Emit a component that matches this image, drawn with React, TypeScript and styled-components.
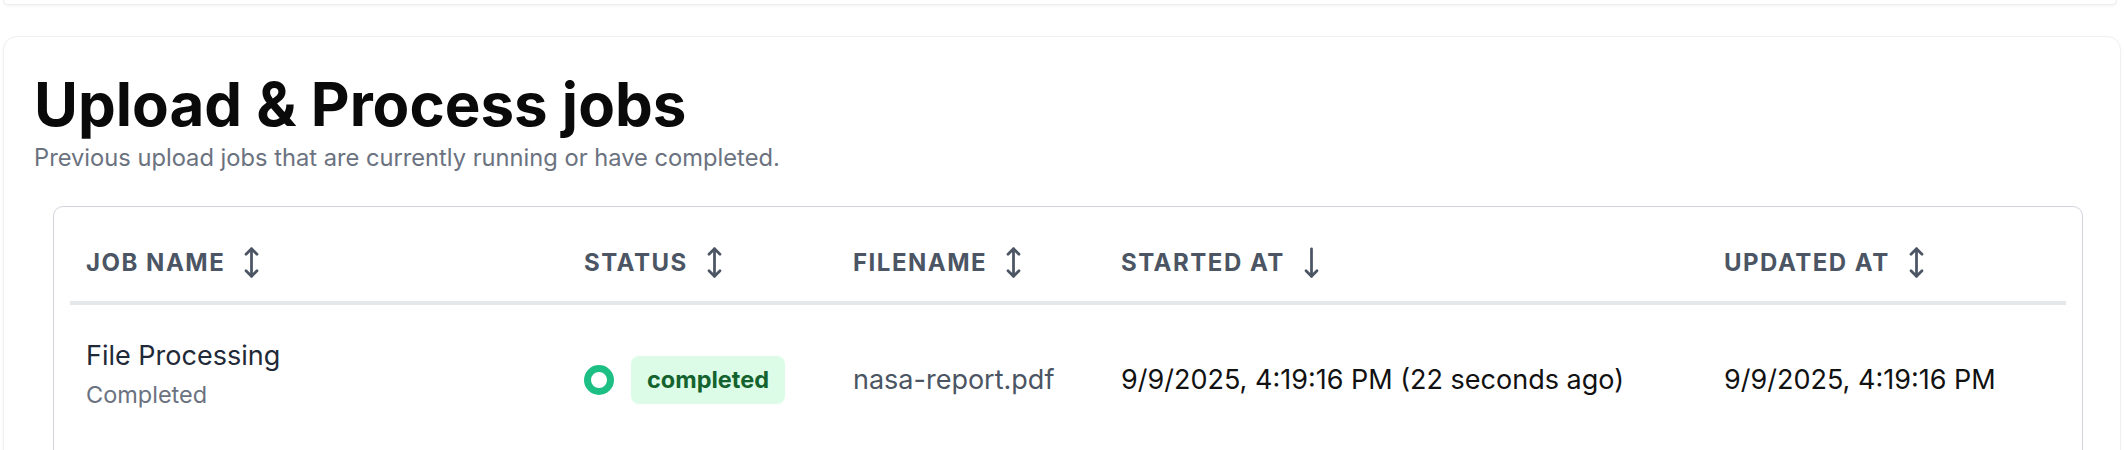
import React from 'react'
import styled, { createGlobalStyle } from 'styled-components'
import { MoveVertical, MoveDown } from 'lucide-react'

const GlobalStyle = createGlobalStyle`
  * { box-sizing: border-box; }
  body {
    margin: 0;
    padding: 0 3px;
    background: #ffffff;
    font-family: Inter, "Noto Sans", sans-serif;
    color: #111827;
  }
`

const TopCard = styled.div`
  height: 5px;
  background: #fff;
  border: 1px solid #eeeeee;
  border-top: none;
  border-radius: 0 0 12px 12px;
  box-shadow: 0 1px 3px rgba(0, 0, 0, 0.06);
  margin-right: 4px;
`

const Card = styled.section`
  margin-top: 31px;
  background: #fff;
  border: 1px solid #f0f0f0;
  border-radius: 14px;
  box-shadow: 0 1px 3px rgba(0, 0, 0, 0.04);
  padding: 35px 30px 0 30px;
  height: 440px;
`

const Title = styled.h1`
  margin: 0;
  font-size: 60px;
  line-height: 65px;
  font-weight: 700;
  color: #0a0a0a;
`

const Subtitle = styled.p`
  margin: 5px 0 0;
  font-size: 23.7px;
  line-height: 32px;
  color: #6b7280;
`

const TableWrap = styled.div`
  margin: 32px 7px 0 19px;
  border: 1px solid #d1d5db;
  border-radius: 10px;
  padding: 16px 16px 0;
  height: 300px;
`

const Table = styled.table`
  width: 100%;
  border-collapse: collapse;
  table-layout: fixed;
`

const HeadCell = styled.th`
  height: 80px;
  padding: 0 16px;
  text-align: left;
  vertical-align: middle;
  border-bottom: 4px solid #e5e7eb;
  font-size: 24px;
  font-weight: 700;
  letter-spacing: 1.5px;
  text-transform: uppercase;
  color: #4b5563;
  white-space: nowrap;
`

const HeadInner = styled.span`
  display: inline-flex;
  align-items: center;
  gap: 10px;
  svg {
    color: #4b5563;
  }
`

const Cell = styled.td<{ $tone?: 'muted' | 'strong' }>`
  padding: 34px 16px 30px;
  vertical-align: middle;
  font-size: 27px;
  line-height: 34px;
  white-space: nowrap;
  color: ${p => (p.$tone === 'muted' ? '#4b5563' : p.$tone === 'strong' ? '#111111' : '#1f2937')};
`

const JobName = styled.div`
  font-size: 27px;
  line-height: 34px;
  color: #1f2937;
`

const JobSub = styled.div`
  margin: 7px 0 10px;
  font-size: 23.5px;
  line-height: 30px;
  color: #6b7280;
`

const StatusWrap = styled.div`
  display: flex;
  align-items: center;
  gap: 17px;
`

const Ring = styled.span`
  width: 30px;
  height: 30px;
  border-radius: 50%;
  border: 7px solid #1dbf84;
  flex-shrink: 0;
`

const Badge = styled.span`
  display: inline-flex;
  align-items: center;
  height: 48px;
  padding: 0 16px;
  border-radius: 8px;
  background: #dcfce7;
  color: #14632f;
  font-size: 23.5px;
  font-weight: 700;
`

const columns: { label: string; width: number; sort: 'both' | 'down' }[] = [
  { label: 'Job name', width: 498, sort: 'both' },
  { label: 'Status', width: 269, sort: 'both' },
  { label: 'Filename', width: 268, sort: 'both' },
  { label: 'Started at', width: 603, sort: 'down' },
  { label: 'Updated at', width: 358, sort: 'both' },
]

export default function App() {
  return (
    <>
      <GlobalStyle />
      <TopCard />
      <Card>
        <Title>Upload &amp; Process jobs</Title>
        <Subtitle>Previous upload jobs that are currently running or have completed.</Subtitle>
        <TableWrap>
          <Table>
            <colgroup>
              {columns.map(c => (
                <col key={c.label} style={{ width: c.width }} />
              ))}
            </colgroup>
            <thead>
              <tr>
                {columns.map(c => (
                  <HeadCell key={c.label}>
                    <HeadInner>
                      {c.label}
                      {c.sort === 'down' ? <MoveDown size={33} strokeWidth={2} /> : <MoveVertical size={33} strokeWidth={2} />}
                    </HeadInner>
                  </HeadCell>
                ))}
              </tr>
            </thead>
            <tbody>
              <tr>
                <Cell>
                  <JobName>File Processing</JobName>
                  <JobSub>Completed</JobSub>
                </Cell>
                <Cell>
                  <StatusWrap>
                    <Ring />
                    <Badge>completed</Badge>
                  </StatusWrap>
                </Cell>
                <Cell $tone="muted">nasa-report.pdf</Cell>
                <Cell $tone="strong">9/9/2025, 4:19:16 PM (22 seconds ago)</Cell>
                <Cell $tone="strong">9/9/2025, 4:19:16 PM</Cell>
              </tr>
            </tbody>
          </Table>
        </TableWrap>
      </Card>
    </>
  )
}
